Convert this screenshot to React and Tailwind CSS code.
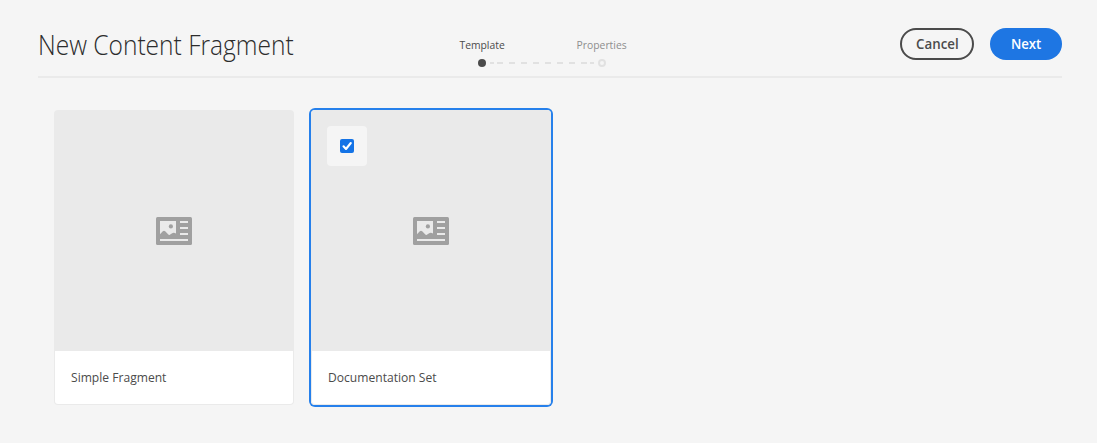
import React from "react";

const DASHES = [
  [0, 4], [7, 6], [19, 6], [31, 6], [43, 6], [55, 6], [67, 6], [79, 6], [91, 6], [100, 4],
];

function FragmentIcon() {
  return (
    <svg width="36" height="28" viewBox="0 0 36 28">
      <rect width="36" height="28" rx="1.5" fill="#a0a0a0" />
      <path
        fill="#eaeaea"
        d="M4 4h16v12.6c-1.4-.9-2.8-1-4.2-.2l-2 1.4c-.6.4-1 .3-1.5-.2L9.200 14.300c-.8-.8-1.600-.8-2.400 0L4 17.300zM24 4h8v2h-8zM24 10h8v2h-8zM24 16h8v2h-8zM4 22h28v2H4z"
      />
      <circle cx="14.9" cy="9.4" r="2.1" fill="#a0a0a0" />
    </svg>
  );
}

function Stepper() {
  return (
    <div className="mt-[10px] ml-[155px] flex w-[180px] flex-col">
      <div className="flex h-[14px] justify-between text-[11px] leading-[14px] whitespace-nowrap">
        <span className="flex w-[60px] justify-center text-[#4b4b4b]">
          <span className="scale-x-[0.94] font-medium">Template</span>
        </span>
        <span className="flex w-[60px] justify-center text-[#8e8e8e]">
          <span className="scale-x-[0.94]">Properties</span>
        </span>
      </div>
      <svg className="mt-[7px] ml-[26px]" width="128" height="8" viewBox="0 0 128 8">
        <circle cx="4" cy="4" r="4" fill="#4b4b4b" />
        {DASHES.map(([x, w]) => (
          <rect key={x} x={x + 12} y="3" width={w} height="2" fill="#e1e1e1" />
        ))}
        <circle cx="124" cy="4" r="3" fill="#f5f5f5" stroke="#e1e1e1" strokeWidth="2" />
      </svg>
    </div>
  );
}

function Card({ title, selected }) {
  return (
    <div
      className={
        "relative flex h-[295px] w-[240px] flex-col rounded-[4px] " +
        (selected ? "ring-2 ring-[#2680eb]" : "")
      }
    >
      <div className="flex h-[241px] items-center justify-center rounded-t-[4px] bg-[#eaeaea]">
        <div className="-ml-px mt-px">
          <FragmentIcon />
        </div>
      </div>
      <div className="flex h-[54px] items-center rounded-b-[4px] border border-t-0 border-[#eaeaea] bg-white pl-4 text-[13px] font-medium whitespace-nowrap text-[#4b4b4b]">
        <span className="origin-left scale-x-[0.93]">{title}</span>
      </div>
      {selected && (
        <div className="absolute top-4 left-4 flex size-10 items-center justify-center rounded-[4px] bg-[#f5f5f5]">
          <svg width="14" height="14" viewBox="0 0 14 14">
            <rect width="14" height="14" rx="2" fill="#1473e6" />
            <path d="M3.5 7.3 6 10l4.8-6" fill="none" stroke="#fff" strokeWidth="2.1" strokeLinecap="round" strokeLinejoin="round" />
          </svg>
        </div>
      )}
    </div>
  );
}

export default function App() {
  return (
    <main className="h-[443px] w-[1097px] overflow-hidden bg-[#f5f5f5] pt-7 pr-[35px] pl-[38px] font-['Open_Sans','Noto_Sans',sans-serif]">
      <header className="flex h-[50px] items-start border-b-2 border-[#eaeaea]">
        <h1 className="w-[259px] origin-left scale-x-[0.909] text-[27px] leading-[34px] font-light whitespace-nowrap text-[#2c2c2c]">
          New Content Fragment
        </h1>
        <Stepper />
        <div className="ml-auto flex gap-4 text-[14px] font-semibold">
          <button className="flex h-8 w-[74px] items-center justify-center rounded-full border-2 border-[#4b4b4b] pb-0.5 text-[#4b4b4b]">
            <span className="scale-x-[0.95]">Cancel</span>
          </button>
          <button className="flex h-8 w-[72px] items-center justify-center rounded-full bg-[#1e76e3] pb-0.5 text-white">
            <span className="scale-x-[0.94]">Next</span>
          </button>
        </div>
      </header>
      <section className="flex gap-[17px] pt-8 pl-4">
        <Card title="Simple Fragment" />
        <Card title="Documentation Set" selected />
      </section>
    </main>
  );
}
